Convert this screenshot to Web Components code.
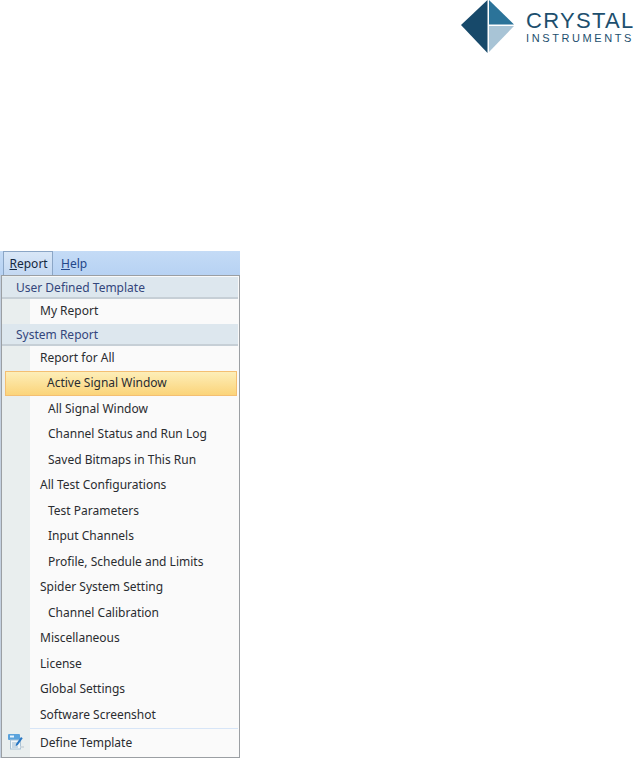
<!DOCTYPE html>
<html>
<head>
<meta charset="utf-8">
<style>
  html, body { margin: 0; padding: 0; background: #fff; }
  body { width: 636px; height: 758px; overflow: hidden; font-family: "Noto Sans", "Liberation Sans", sans-serif; }
  u { text-underline-offset: 1px; }
</style>
</head>
<body>
<brand-logo></brand-logo>
<menu-bar>
  <span slot="first"><u>R</u>eport</span>
  <span slot="second"><u>H</u>elp</span>
</menu-bar>
<drop-menu>
  <menu-header>User Defined Template</menu-header>
  <menu-row>My Report</menu-row>
  <menu-header>System Report</menu-header>
  <menu-row>Report for All</menu-row>
  <menu-row level="2" active>Active Signal Window</menu-row>
  <menu-row level="2">All Signal Window</menu-row>
  <menu-row level="2">Channel Status and Run Log</menu-row>
  <menu-row level="2">Saved Bitmaps in This Run</menu-row>
  <menu-row>All Test Configurations</menu-row>
  <menu-row level="2">Test Parameters</menu-row>
  <menu-row level="2">Input Channels</menu-row>
  <menu-row level="2">Profile, Schedule and Limits</menu-row>
  <menu-row>Spider System Setting</menu-row>
  <menu-row level="2">Channel Calibration</menu-row>
  <menu-row>Miscellaneous</menu-row>
  <menu-row>License</menu-row>
  <menu-row>Global Settings</menu-row>
  <menu-row>Software Screenshot</menu-row>
  <menu-row footer>
    <svg slot="icon" width="18" height="18" viewBox="0 0 18 18">
      <rect x="1" y="1" width="12" height="6" rx="1" fill="#5ba3dc"/>
      <rect x="3" y="2.500" width="4" height="2" fill="#e8f4fc"/>
      <rect x="3.500" y="7" width="10" height="9" fill="#f2f7fa" stroke="#a9c3d6" stroke-width="1"/>
      <path d="M5 10h6M5 12h5M5 14h6" stroke="#9ab7cc" stroke-width="1"/>
      <path d="M9 11l5-7 1.700 1.200-5 7-2 .8z" fill="#2a78c4"/>
      <path d="M13 14h4" stroke="#c9d2d8" stroke-width="1.500"/>
    </svg>
    Define Template
  </menu-row>
</drop-menu>
<script>
class BrandLogo extends HTMLElement {
  constructor() {
    super();
    this.attachShadow({ mode: "open" });
    this.shadowRoot.innerHTML = `
      <style>
        :host { display: flex; justify-content: flex-end; align-items: flex-start; gap: 12px; height: 53px; }
        .words { display: flex; flex-direction: column; width: 110px; padding-top: 9.500px; color: #1d4f6e; font-family: "Liberation Sans", Arial, sans-serif; }
        .top { font-size: 22px; line-height: 22px; letter-spacing: 1.300px; white-space: nowrap; }
        .bottom { font-size: 11px; line-height: 11px; margin-top: 1px; letter-spacing: 2.600px; white-space: nowrap; }
      </style>
      <svg width="53" height="53" viewBox="0 0 53 53">
        <polygon points="26.500,0 0,25 26.500,53" fill="#17496a"/>
        <polygon points="28,0 53,24.500 28,24.500" fill="#2b7399"/>
        <polygon points="28,26 53,26 28,52" fill="#a8c4d6"/>
      </svg>
      <div class="words"><div class="top">CRYSTAL</div><div class="bottom">INSTRUMENTS</div></div>
    `;
  }
}
customElements.define("brand-logo", BrandLogo);

class MenuBar extends HTMLElement {
  constructor() {
    super();
    this.attachShadow({ mode: "open" });
    this.shadowRoot.innerHTML = `
      <style>
        :host { display: flex; align-items: stretch; box-sizing: border-box; width: 240px; height: 24px; margin-top: 198px; padding-left: 3px; background: linear-gradient(#c4dbf6, #b7d2f3); font-size: 12px; color: #24478a; }
        .tab { display: flex; align-items: center; padding: 0 0 0 8px; }
        .open { box-sizing: border-box; width: 50px; padding-left: 5.500px; background: linear-gradient(#d9e7f7, #c3d8f2); border: 1px solid #8ba6c6; border-bottom: 0; color: #15283f; }
      </style>
      <div class="tab open"><slot name="first"></slot></div>
      <div class="tab"><slot name="second"></slot></div>
    `;
  }
}
customElements.define("menu-bar", MenuBar);

class DropMenu extends HTMLElement {
  constructor() {
    super();
    this.attachShadow({ mode: "open" });
    this.shadowRoot.innerHTML = `
      <style>
        :host { display: block; box-sizing: border-box; width: 239px; margin-left: 1px; padding: 1px 1.500px 0 0; border: 1px solid #9b9fa3; box-shadow: -1px 0 0 #c3d0e0; background: linear-gradient(90deg, #e9eeee 28px, #fafafa 28px); }
      </style>
      <slot></slot>
    `;
  }
}
customElements.define("drop-menu", DropMenu);

class MenuHeader extends HTMLElement {
  constructor() {
    super();
    this.attachShadow({ mode: "open" });
    this.shadowRoot.innerHTML = `
      <style>
        :host { display: flex; align-items: center; box-sizing: border-box; height: 21.500px; padding: 1px 0 0 14px; background: #dde7ee; border-bottom: 2px solid #c6cfd6; font-size: 12px; color: #34467c; }
      </style>
      <slot></slot>
    `;
  }
}
customElements.define("menu-header", MenuHeader);

class MenuRow extends HTMLElement {
  constructor() {
    super();
    this.attachShadow({ mode: "open" });
    this.shadowRoot.innerHTML = `
      <style>
        :host { display: flex; align-items: center; box-sizing: border-box; height: 25.500px; padding-left: 38px; padding-bottom: 2px; font-size: 12px; color: #2a2c30; position: relative; white-space: nowrap; }
        :host([level="2"]) { padding-left: 46px; }
        :host([active]) { margin: -0.500px 1px 0.500px 3px; padding-left: 41px; padding-bottom: 1px; background: linear-gradient(#fdeeb8, #fbd47a); border: 1px solid #f4bf72; }
        :host([footer]) { height: 28.500px; margin-left: 28px; padding-left: 10px; padding-bottom: 0; border-top: 1px solid #d7e5f7; }
        .icon { position: absolute; left: -23px; top: 4px; display: block; line-height: 0; }
        :host(:not([footer])) .icon { display: none; }
      </style>
      <div class="icon"><slot name="icon"></slot></div>
      <slot></slot>
    `;
  }
}
customElements.define("menu-row", MenuRow);
</script>
</body>
</html>
